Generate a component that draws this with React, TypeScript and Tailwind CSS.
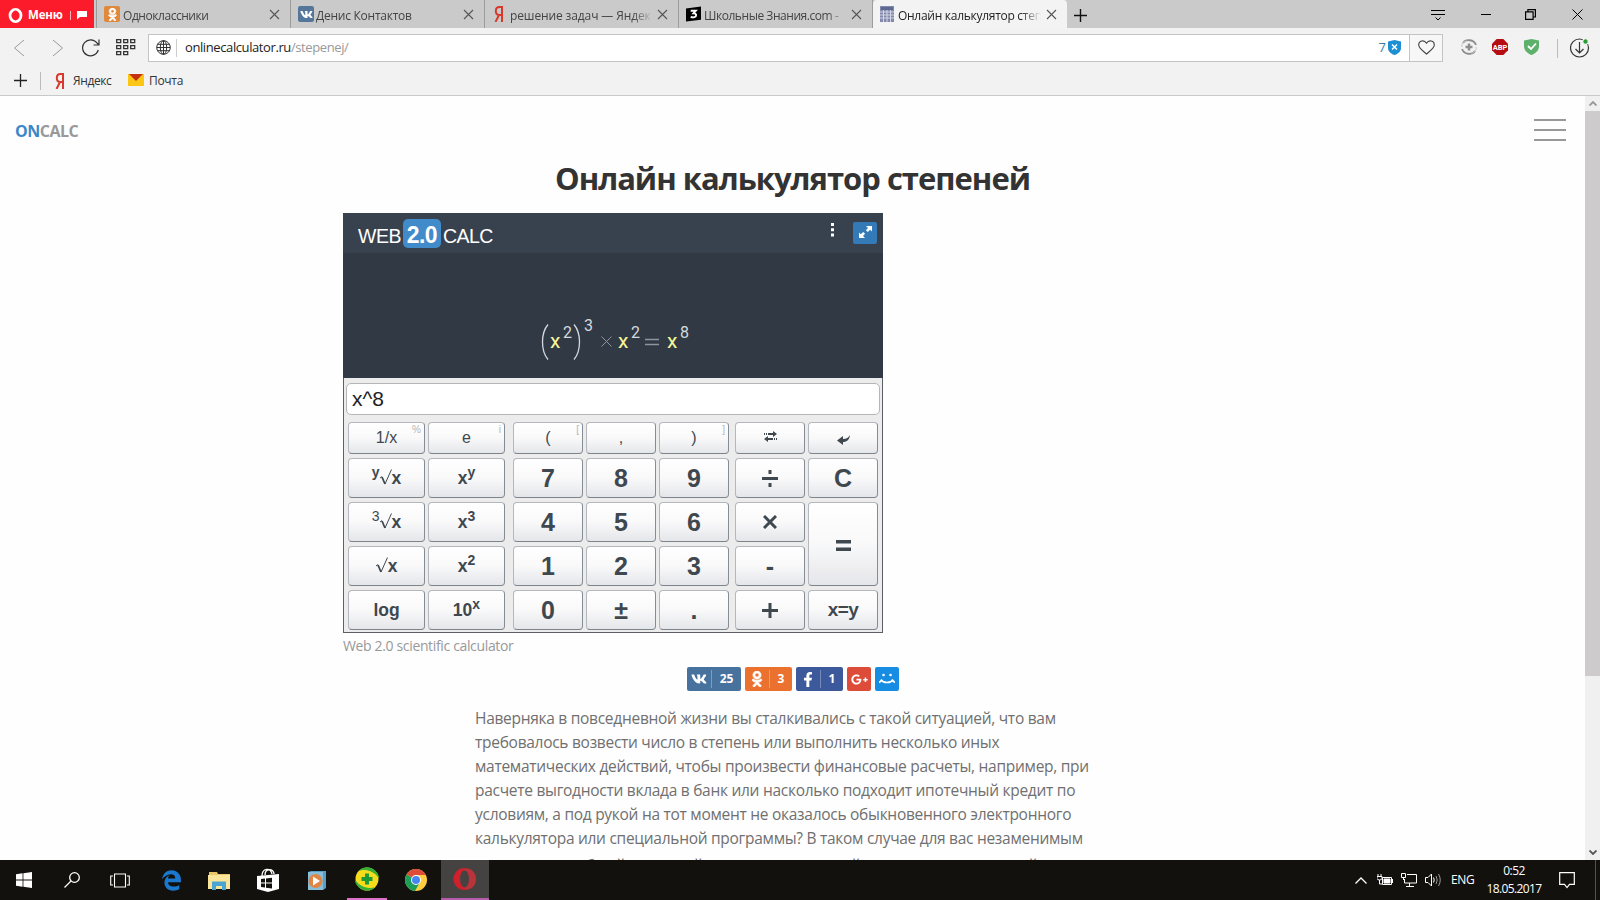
import React from 'react';
import { FaFacebookF, FaOdnoklassniki, FaVk } from 'react-icons/fa';
import { FaEdgeLegacy, FaGooglePlusG } from 'react-icons/fa6';

interface TabProps {
  icon: React.ReactNode;
  title: string;
  textClass?: string;
  active?: boolean;
}

interface KeyProps {
  children: React.ReactNode;
  corner?: string;
  className?: string;
}

function CloseIcon() {
  return (
    <svg className="h-[11px] w-[11px]" viewBox="0 0 11 11" fill="none" stroke="#555" strokeWidth="1.1">
      <path d="M1 1l9 9M10 1l-9 9" />
    </svg>
  );
}

function Tab({ icon, title, textClass = '', active }: TabProps) {
  return (
    <div
      className={`flex h-7 w-[194px] items-center pl-[7px] pr-[10px] ${
        active ? 'rounded-t bg-[#f3f3f3] text-[#222]' : 'border-r border-[#9d9d9d] text-[#444]'
      }`}
    >
      <div className="flex w-[18px] shrink-0 items-center">{icon}</div>
      <div className="h-7 w-[143px] whitespace-nowrap pt-px text-[12px] leading-[29px] [mask-image:linear-gradient(to_right,black_86%,transparent)]">
        <span className={textClass}>{title}</span>
      </div>
      <div className="ml-auto">
        <CloseIcon />
      </div>
    </div>
  );
}

function YandexIcon({ className = '' }: { className?: string }) {
  return (
    <svg className={`h-4 w-[10px] ${className}`} viewBox="0 0 10 16" fill="none" stroke="#d8392b" strokeWidth="2">
      <path d="M8 16V1H5.5C3.2 1 1.8 2.600 1.800 5s1.300 4 3.500 4H8M5 9L1.500 16" />
    </svg>
  );
}

function Key({ children, corner, className = 'pt-px' }: KeyProps) {
  return (
    <button
      className={`relative flex items-center justify-center rounded-[4px] border border-[#b4b8bd] border-r-[#858c93] border-b-[#7d848b] bg-gradient-to-b from-white via-[#f9f9fa] to-[#e5e6ea] font-bold text-[#3f484f] ${className}`}
    >
      {children}
      {corner && <span className="absolute right-[3px] top-px text-[10px] font-normal leading-3 text-[#b5b5b5]">{corner}</span>}
    </button>
  );
}

function Sup({ children }: { children: React.ReactNode }) {
  return <span className="relative -top-[6px] text-[14px]">{children}</span>;
}

function Root() {
  return (
    <svg className="-mt-[3px] h-4 w-3" viewBox="0 0 12 16" fill="none" stroke="#3f484f">
      <path d="M0 9l2-1.500" strokeWidth="1" />
      <path d="M2 8l3 7" strokeWidth="1.800" />
      <path d="M5 15L11.500 .5" strokeWidth="1" />
    </svg>
  );
}

function Paren({ right }: { right?: boolean }) {
  return (
    <svg className="h-9 w-2" viewBox="0 0 8 36" fill="none" stroke="#d5d9df" strokeWidth="1.300">
      <path d={right ? 'M1 .5Q6.500 7 6.500 18T1 35.500' : 'M7 .5Q1.500 7 1.500 18T7 35.500'} />
    </svg>
  );
}

function TitleBar() {
  return (
    <div className="flex h-7 bg-[#cacaca]">
      <div className="flex h-7 w-[94px] items-center bg-[#fb1b2a] pl-2 pt-[2px] text-white">
        <svg className="h-[15px] w-[15px]" viewBox="0 0 15 15">
          <ellipse cx="7.500" cy="7.500" rx="5.500" ry="6" fill="none" stroke="white" strokeWidth="2.800" />
          <ellipse cx="7.500" cy="7.500" rx="3" ry="5" fill="#fb1b2a" />
        </svg>
        <span className="ml-[5px] w-[37px] text-[11.500px] font-bold leading-6 tracking-[-0.200px]">Меню</span>
        <div className="ml-[5px] h-[9px] w-px bg-[#ffb0b4]" />
        <svg className="ml-[6px] h-[10px] w-[10px]" viewBox="0 0 10 10" fill="white">
          <path d="M0 1h10v6H3L0 9.500z" />
        </svg>
      </div>
      <div className="ml-[2px] flex border-l border-[#9d9d9d]">
        <Tab
          icon={
            <span className="flex h-4 w-4 items-center justify-center rounded-[2px] bg-[#e0893d]">
              <FaOdnoklassniki className="text-[13px] text-white" stroke="white" strokeWidth={25} />
            </span>
          }
          title="Одноклассники"
          textClass="pl-px tracking-[-0.450px]"
        />
        <Tab
          icon={
            <span className="flex h-4 w-4 items-center justify-center rounded-[2px] bg-[#54769b]">
              <FaVk className="text-[13px] text-white" />
            </span>
          }
          title="Денис Контактов"
          textClass="tracking-[-0.250px]"
        />
        <Tab icon={<YandexIcon className="ml-[2px]" />} title="решение задач — Яндек" textClass="tracking-[-0.120px]" />
        <Tab
          icon={
            <svg className="h-4 w-[15px]" viewBox="0 0 16 16">
              <path d="M0 2L16 0v14L0 16z" fill="black" />
              <path d="M5 4.500h5.500L8 7.300c2 0 2.800 1 2.800 2 0 2-3 3-5.800 1.700" fill="none" stroke="white" strokeWidth="2" />
            </svg>
          }
          title="Школьные Знания.com -"
          textClass="tracking-[-0.450px]"
        />
        <Tab
          active
          icon={
            <svg className="h-4 w-[14px]" viewBox="0 0 14 16">
              <path d="M0 0h14v16H0z" fill="#8389ad" />
              <path d="M1 1h12v3H1z" fill="#5e6994" />
              <path d="M0 6h14M0 9h14M0 12h14M3.500 4v12M7 4v12M10.500 4v12" stroke="#d2d5e4" />
            </svg>
          }
          title="Онлайн калькулятор степ"
          textClass="tracking-[-0.280px]"
        />
      </div>
      <svg className="ml-[7px] mt-[9px] h-[13px] w-[13px]" viewBox="0 0 13 13" stroke="#111" strokeWidth="1.400">
        <path d="M0 6.500h13M6.500 0v13" />
      </svg>
      <div className="ml-auto flex h-7 items-center text-black">
        <svg className="mr-9 mt-px h-3 w-[14px]" viewBox="0 0 14 12" fill="none" stroke="currentColor">
          <path d="M0 1.500h14M0 5.500h14M4.500 8.500L7 11l2.500-2.500" />
        </svg>
        <svg className="mr-[34px] h-[10px] w-[10px]" viewBox="0 0 10 10" stroke="currentColor">
          <path d="M0 5.500h10" />
        </svg>
        <svg className="mr-[36px] h-[11px] w-[11px]" viewBox="0 0 11 11" fill="none" stroke="currentColor" strokeWidth="1.200">
          <path d="M.6 2.800h7.500v7.500H.6zM2.900 2.800V.6h7.500V8H8" />
        </svg>
        <svg className="mr-[17px] h-[11px] w-[11px]" viewBox="0 0 11 11" stroke="currentColor">
          <path d="M.5.5l10 10M10.500.5l-10 10" />
        </svg>
      </div>
    </div>
  );
}

function AddressBar() {
  return (
    <div className="flex h-10 items-center bg-[#f2f2f2]">
      <svg className="ml-[13px] h-[18px] w-3" viewBox="0 0 12 18" fill="none" stroke="#999">
        <path d="M11 1L1.500 9l9.500 8" />
      </svg>
      <svg className="ml-[27px] h-[18px] w-3" viewBox="0 0 12 18" fill="none" stroke="#999">
        <path d="M1 1l9.500 8L1 17" />
      </svg>
      <svg className="ml-[18px] h-[18px] w-[18px]" viewBox="0 0 18 18" fill="none" stroke="#333" strokeWidth="1.200">
        <path d="M16.300 11A8 8 0 1 1 15 4l2 2M17 .5V6h-5.500" />
      </svg>
      <svg className="-mt-px ml-4 h-[17px] w-5" viewBox="0 0 20 17" fill="none" stroke="#333" strokeWidth="1.300">
        <path d="M.7.7h4v3h-4zM7.700.7h4v3h-4zM14.700.7h4v3h-4zM.7 6.700h4v3h-4zM7.700 6.700h4v3h-4zM14.700 6.700h4v3h-4zM.7 12.700h4v3h-4zM7.700 12.700h4v3h-4z" />
      </svg>
      <div className="ml-3 flex h-7 w-[1295px] items-center border border-[#c4c4c4] bg-white">
        <svg className="-mt-px ml-[7px] h-[15px] w-[15px]" viewBox="0 0 15 15" fill="none" stroke="#333">
          <circle cx="7.500" cy="7.500" r="6.800" />
          <ellipse cx="7.500" cy="7.500" rx="3.200" ry="6.800" />
          <path d="M.7 7.500h13.600M7.500.7v13.600M1.500 4.300h12M1.500 10.700h12" />
        </svg>
        <div className="ml-[5px] h-[18px] w-px bg-[#ccc]" />
        <div className="-mt-[3px] ml-2 text-[13px] leading-[26px] tracking-[-0.400px] text-[#222]">
          onlinecalculator.ru<span className="text-[#999]">/stepenej/</span>
        </div>
        <div className="ml-auto flex h-full items-center">
          <span className="-mt-px text-[13px] text-[#3a7ca5]">7</span>
          <svg className="-mt-px ml-[2px] mr-2 h-[15px] w-[13px]" viewBox="0 0 13 15">
            <path d="M0 1.500L6.500 0 13 1.500V8c0 4-4 6.300-6.500 7C4 14.300 0 12 0 8z" fill="#1d8fd3" />
            <path d="M4 4.500l5 5M9 4.500l-5 5" stroke="white" strokeWidth="1.500" />
          </svg>
          <div className="flex h-full w-[33px] items-center justify-center border-l border-[#c4c4c4] bg-[#f7f7f7]">
            <svg className="-mt-px h-[15px] w-[17px]" viewBox="0 0 17 15" fill="none" stroke="#444" strokeWidth="1.100">
              <path d="M8.500 14C6 11.500.7 8.500.7 4.700.7 1 6 -.8 8.500 3.300 11-.8 16.300 1 16.300 4.700c0 3.800-5.300 6.800-7.800 9.300z" />
            </svg>
          </div>
        </div>
      </div>
      <svg className="-mt-[2px] ml-[18px] h-4 w-4" viewBox="0 0 16 16" fill="none" stroke="#8d8d8d">
        <path d="M8 4.500v7M4.500 8h7" strokeWidth="2.500" />
        <path d="M2 4C5-.5 13 .5 15 6M14 12c-3 4.500-11 3.500-13-2" strokeWidth="1.800" />
        <path d="M1 8c-1-3 2-6 5-6M15 8c1 3-2 6-5 6" stroke="#c6c6c6" />
      </svg>
      <svg className="-mt-[2px] ml-[15px] h-4 w-4" viewBox="0 0 16 16">
        <path d="M4.700 0h6.600L16 4.700v6.600L11.300 16H4.700L0 11.300V4.700z" fill="#b50d12" />
        <text x="8" y="10.700" textAnchor="middle" fontSize="7.500" fontWeight="bold" fontFamily="Roboto, sans-serif" fill="white">ABP</text>
      </svg>
      <svg className="-mt-[2px] ml-4 h-4 w-[15px]" viewBox="0 0 15 16">
        <path d="M0 1.500L7.500 0 15 1.500V7c0 5-4 7.500-7.500 9C4 14.500 0 12 0 7z" fill="#5eb16b" />
        <path d="M4 7l3 3 5-5.500" fill="none" stroke="white" strokeWidth="1.800" />
      </svg>
      <div className="ml-[18px] h-[19px] w-px bg-[#bbb]" />
      <svg className="-mt-px ml-3 h-5 w-5" viewBox="0 0 20 20" fill="none" stroke="#333" strokeWidth="1.200">
        <circle cx="9.500" cy="10" r="9" />
        <path d="M9.500 4v11M5.500 11l4 4 4-4" />
        <circle cx="15.500" cy="3.500" r="2.800" fill="#2b9b33" stroke="#f2f2f2" />
      </svg>
    </div>
  );
}

function BookmarksBar() {
  return (
    <div className="flex h-7 items-center border-b border-[#c9c9c9] bg-[#f2f2f2] pb-[2px] text-[12px] text-[#333]">
      <svg className="ml-[14px] h-[13px] w-[13px]" viewBox="0 0 13 13" stroke="#222" strokeWidth="1.300">
        <path d="M0 6.500h13M6.500 0v13" />
      </svg>
      <div className="ml-[13px] h-[18px] w-px bg-[#bbb]" />
      <YandexIcon className="ml-[14px]" />
      <span className="ml-2 w-[39px] tracking-[-0.400px]">Яндекс</span>
      <svg className="-mt-px ml-4 h-3 w-4" viewBox="0 0 16 12">
        <path d="M0 0h16v12H0z" fill="#fbc614" />
        <path d="M1 0h14L8 7z" fill="#c53212" />
      </svg>
      <span className="ml-[5px] tracking-[-0.300px]">Почта</span>
    </div>
  );
}

const digitRows = ['7', '8', '9', '4', '5', '6', '1', '2', '3', '0', '±', '.'];

function Calculator() {
  return (
    <div className="h-[420px] w-[540px] border border-[#5c6066] bg-[#ececed] font-['Liberation_Sans',sans-serif]">
      <div className="-mx-px -mt-px bg-[#313945]">
        <div className="flex h-10 bg-[#38424f] text-white">
          <div className="flex items-center pl-[15px] pt-[7px] text-[19.500px] leading-none tracking-[-0.500px]">
            WEB
            <span className="relative -top-[3px] mx-[2px] flex h-[29px] w-[38px] items-center justify-center rounded-[5px] bg-[#428bca] pt-[3px] text-[23px] font-bold tracking-[-0.600px]">2.0</span>
            CALC
          </div>
          <svg className="ml-auto mr-[19px] mt-[10px] h-[14px] w-[3px]" viewBox="0 0 3 14" fill="white">
            <path d="M0 0h3v3H0zM0 5.300h3v3H0zM0 10.500h3v3H0z" />
          </svg>
          <div className="mr-[6px] mt-[9px] flex h-[22px] w-6 items-center justify-center rounded-[2px] bg-[#337ab7]">
            <svg className="-mt-[2px] h-3 w-[13px]" viewBox="0 0 13 12" fill="white">
              <path d="M7 0h6v5.500l-1.800-1.700-2.400 2.300-1.900-1.900L9 2zM6 12H0V6.500l1.800 1.700 2.400-2.300 1.900 1.900L4 10z" />
            </svg>
          </div>
        </div>
        <div className="flex h-[125px] items-center pl-[198px] pt-[52px] font-[Roboto,sans-serif] text-[21px] leading-none text-[#d5d9df]">
          <Paren />
          <span className="ml-px w-[13px] text-[#f7f799]">x</span>
          <span className="-mt-[17px] w-[10px] text-[16px]">2</span>
          <Paren right />
          <span className="-mt-8 ml-[3px] w-[10px] text-[16px]">3</span>
          <svg className="ml-[7px] h-[11px] w-[11px]" viewBox="0 0 11 11" stroke="#8d95a1">
            <path d="M.5.5l10 10M10.500.5l-10 10" />
          </svg>
          <span className="ml-[6px] w-[13px] text-[#f7f799]">x</span>
          <span className="-mt-[17px] w-[10px] text-[16px]">2</span>
          <svg className="ml-[4px] h-2 w-[14px]" viewBox="0 0 14 8" stroke="#8d95a1" strokeWidth="1.300">
            <path d="M0 1.500h14M0 6.500h14" />
          </svg>
          <span className="ml-[8px] w-[13px] text-[#f7f799]">x</span>
          <span className="-mt-[17px] w-[10px] text-[16px]">8</span>
        </div>
      </div>
      <div className="mx-[2px] mt-[5px] flex h-8 items-center rounded-[5px] border border-[#b5b5b5] bg-white pl-[5px] text-[21px] text-[#222]">x^8</div>
      <div className="ml-1 mt-[7px] flex">
        <div className="grid w-[157px] grid-cols-2 grid-rows-[32px_40px_40px_40px_40px] gap-x-[3px] gap-y-1 text-[17.500px]">
          <Key className="pb-px" corner="%"><span className="text-[16px] font-normal">1/x</span></Key>
          <Key className="pb-px" corner="i"><span className="text-[16px] font-normal">e</span></Key>
          <Key><Sup>y</Sup><Root />x</Key>
          <Key>x<Sup>y</Sup></Key>
          <Key><Sup><span className="font-normal">3</span></Sup><Root />x</Key>
          <Key>x<Sup>3</Sup></Key>
          <Key><Root />x</Key>
          <Key>x<Sup>2</Sup></Key>
          <Key>log</Key>
          <Key>10<Sup>x</Sup></Key>
        </div>
        <div className="ml-2 grid w-[216px] grid-cols-3 grid-rows-[32px_40px_40px_40px_40px] gap-x-[3px] gap-y-1 text-[25px]">
          <Key className="pb-px" corner="["><span className="text-[16px] font-normal">(</span></Key>
          <Key className="pb-px"><span className="text-[16px] font-normal">,</span></Key>
          <Key className="pb-px" corner="]"><span className="text-[16px] font-normal">)</span></Key>
          {digitRows.map((digit) => (
            <Key key={digit}>{digit}</Key>
          ))}
        </div>
        <div className="ml-[6px] grid w-[143px] grid-cols-2 grid-rows-[32px_40px_40px_40px_40px] gap-x-[3px] gap-y-1 text-[25px]">
          <Key>
            <svg className="-mt-1 h-[11px] w-[13px]" viewBox="0 0 13 11" fill="currentColor">
              <path d="M4 2h5V0l4 3-4 3V4H4zM0 2h1v2H0zM2 2h1v2H2zM9 7H4V5L0 8l4 3V9h5zM10 7h1v2h-1zM12 7h1v2h-1z" />
            </svg>
          </Key>
          <Key>
            <svg className="mt-[2px] h-[10px] w-[13px]" viewBox="0 0 13 10" fill="currentColor">
              <path d="M0 5.500L6 1v3c3 0 5-1 7-4-.5 4.500-3 7-7 7v3z" />
            </svg>
          </Key>
          <Key>
            <svg className="-mt-px h-[17px] w-4" viewBox="0 0 16 17" fill="currentColor"><path d="M0 7h16v3H0zM6.500 0h3v4h-3zM6.500 13h3v4h-3z" /></svg>
          </Key>
          <Key>C</Key>
          <Key>
            <svg className="-mt-px h-[14px] w-[14px]" viewBox="0 0 14 14" fill="none" stroke="currentColor" strokeWidth="3"><path d="M1 1l12 12M13 1L1 13" /></svg>
          </Key>
          <Key className="row-span-2 pt-[3px]">
            <svg className="h-[11px] w-[15px]" viewBox="0 0 15 11" fill="currentColor"><path d="M0 0h15v3.500H0zM0 7.500h15V11H0z" /></svg>
          </Key>
          <Key>-</Key>
          <Key>
            <svg className="-mt-px h-[15px] w-4" viewBox="0 0 16 15" fill="currentColor"><path d="M0 6h16v3H0zM6.500 0h3v15h-3z" /></svg>
          </Key>
          <Key><span className="text-[19px] tracking-[-0.500px]">x=y</span></Key>
        </div>
      </div>
    </div>
  );
}

function ShareButtons() {
  return (
    <div className="flex gap-1 text-[12px] font-bold text-white">
      <div className="flex h-6 w-[54px] items-center rounded-[2px] bg-[#48729e]">
        <FaVk className="ml-1 text-[16px]" />
        <span className="ml-1 flex h-[18px] flex-1 items-center justify-center border-l border-[#7f9cbb]">25</span>
      </div>
      <div className="flex h-6 w-[47px] items-center rounded-[2px] bg-[#eb722e]">
        <FaOdnoklassniki className="ml-1 text-[16px]" stroke="white" strokeWidth={25} />
        <span className="ml-1 flex h-[18px] flex-1 items-center justify-center border-l border-[#f19c6c]">3</span>
      </div>
      <div className="flex h-6 w-[47px] items-center rounded-[2px] bg-[#3c5a9b]">
        <FaFacebookF className="ml-1 w-4 text-[15px]" />
        <span className="ml-1 flex h-[18px] flex-1 items-center justify-center border-l border-[#768bb9]">1</span>
      </div>
      <div className="flex h-6 w-6 items-center justify-center rounded-[2px] bg-[#dd4b39]">
        <FaGooglePlusG className="text-[17px]" />
      </div>
      <div className="flex h-6 w-6 items-center justify-center rounded-[2px] bg-[#168de2]">
        <svg className="h-3 w-4" viewBox="0 0 16 12" fill="none" stroke="white" strokeWidth="1.700">
          <path d="M2 6.500c2 4 10 4 12 0M0 9.500l3-2.500M16 9.500L13 7" />
          <circle cx="4.500" cy="2" r="1.300" fill="white" stroke="none" />
          <circle cx="11.500" cy="2" r="1.300" fill="white" stroke="none" />
        </svg>
      </div>
    </div>
  );
}

const article = [
  'Наверняка в повседневной жизни вы сталкивались с такой ситуацией, что вам',
  'требовалось возвести число в степень или выполнить несколько иных',
  'математических действий, чтобы произвести финансовые расчеты, например, при',
  'расчете выгодности вклада в банк или насколько подходит ипотечный кредит по',
  'условиям, а под рукой на тот момент не оказалось обыкновенного электронного',
  'калькулятора или специальной программы? В таком случае для вас незаменимым',
  'станет этот удобный понятный или математический, или уже многоцелевой',
];

function PageContent() {
  return (
    <div className="flex h-[764px] bg-[#fefefe]">
      <main className="h-full w-[1585px] overflow-hidden">
        <div className="flex h-[59px] items-start justify-between">
          <div className="pl-[15px] pt-[23px] text-[16px] font-bold leading-6 tracking-[-0.500px] text-[#999]">
            <span className="text-[#3d87c8]">ON</span>CALC
          </div>
          <div className="mr-[19px] mt-[23px] flex flex-col gap-2">
            <div className="h-[2px] w-8 bg-[#999]" />
            <div className="h-[2px] w-8 bg-[#999]" />
            <div className="h-[2px] w-8 bg-[#999]" />
          </div>
        </div>
        <h1 className="h-[58px] text-center text-[31px] font-bold leading-[46px] tracking-[-1px] text-[#333]">Онлайн калькулятор степеней</h1>
        <div className="pl-[343px]">
          <Calculator />
          <div className="h-[34px] text-[14px] leading-[26px] tracking-[-0.350px] text-[#999]">Web 2.0 scientific calculator</div>
        </div>
        <div className="pl-[687px]">
          <ShareButtons />
        </div>
        <div className="ml-[475px] mt-[15px] text-[15.500px] leading-6 tracking-[-0.280px] text-[#707070]">
          {article.map((line) => (
            <p key={line} className="h-6 whitespace-nowrap last:pt-[3px]">{line}</p>
          ))}
        </div>
      </main>
      <div className="flex w-[15px] flex-col items-center bg-[#f0f0f0]">
        <svg className="my-[5px] h-[5px] w-2" viewBox="0 0 8 5" fill="none" stroke="#999" strokeWidth="1.800"><path d="M.5 4.500L4 1l3.500 3.500" /></svg>
        <div className="h-[565px] w-full bg-[#cdcbcc]" />
        <svg className="mb-[5px] mt-auto h-[5px] w-2" viewBox="0 0 8 5" fill="none" stroke="#555" strokeWidth="1.800"><path d="M.5.5L4 4 7.500.5" /></svg>
      </div>
    </div>
  );
}

function TaskItem({ children, className = 'w-12' }: { children: React.ReactNode; className?: string }) {
  return <div className={`flex h-10 items-center justify-center ${className}`}>{children}</div>;
}

function Taskbar() {
  return (
    <div className="flex h-10 items-center bg-[#13110e] text-white">
      <TaskItem>
        <svg className="h-4 w-4" viewBox="0 0 16 16" fill="white">
          <path d="M0 2.300L6.600 1.300v6.300H0zM7.400 1.200L16 0v7.600H7.400zM0 8.400h6.600v6.300L0 13.700zM7.400 8.400H16V16l-8.600-1.200z" />
        </svg>
      </TaskItem>
      <TaskItem>
        <svg className="h-4 w-4" viewBox="0 0 16 16" fill="none" stroke="white" strokeWidth="1.300">
          <circle cx="10.500" cy="5.500" r="4.800" />
          <path d="M7 9L.5 15.500" />
        </svg>
      </TaskItem>
      <TaskItem>
        <svg className="h-[15px] w-5" viewBox="0 0 20 15" fill="none" stroke="white" strokeWidth="1.100">
          <path d="M4.500 1h11v13h-11zM3 3H.7v9H3M17 3h2.300v9H17" />
        </svg>
      </TaskItem>
      <TaskItem className="ml-[3px] w-12">
        <FaEdgeLegacy className="text-[21px] text-[#1b78cf]" />
      </TaskItem>
      <TaskItem>
        <svg className="h-[19px] w-[22px]" viewBox="0 0 22 19">
          <path d="M1 1h8l1 2h12v15H1z" fill="#e9c867" />
          <path d="M0 4h22v14H0z" fill="#fbe59b" />
          <path d="M4 19v-8.500h14V19h-4v-4H8v4z" fill="#4aa5d2" />
        </svg>
      </TaskItem>
      <TaskItem className="ml-px w-12">
        <svg className="h-6 w-[22px]" viewBox="0 0 22 24">
          <path d="M0 8l22-2v15L11 24 0 21z" fill="white" />
          <path d="M5 8C5 0 14-1 15 6M8 7c0-7 9-7 9-1" fill="none" stroke="white" strokeWidth="1.300" />
          <path d="M4 11l4-.5v4H4zM9 10.400l6-.7v4.800H9zM4 15.500h4v4L4 19zM9 15.500h6v5l-6-.8z" fill="#13110e" />
        </svg>
      </TaskItem>
      <TaskItem className="ml-px w-12">
        <svg className="h-[19px] w-5" viewBox="0 0 20 19">
          <path d="M1 1l3-1h15v17l-3 2H1z" fill="#55a0c6" />
          <path d="M1 1h15v18H1z" fill="#87bfdb" />
          <circle cx="8.500" cy="10" r="7" fill="#e08645" />
          <path d="M6 5.500v9l7-4.500z" fill="white" />
        </svg>
      </TaskItem>
      <TaskItem className="ml-[6px] w-10 border-b-[2px] border-[#dd72ca]">
        <svg className="h-6 w-6" viewBox="0 0 24 24">
          <circle cx="12" cy="12" r="11.500" fill="#f5dd1d" />
          <path d="M5 3c7-5 17-1 18.500 7C20 5 12 1 5 3zM19 21C12 26 2 22 .5 14 4 19 12 23 19 21z" fill="#35ae38" stroke="#35ae38" strokeWidth="1" />
          <path d="M12 6.500v11M6.500 12h11" stroke="#1b9a35" strokeWidth="4" />
        </svg>
      </TaskItem>
      <TaskItem className="ml-[5px] w-12">
        <svg className="h-[22px] w-[22px]" viewBox="0 0 22 22">
          <circle cx="11" cy="11" r="11" fill="#ffcd40" />
          <path d="M11 11L1.500 5.500a11 11 0 0 1 19 0L20.500 6H11z" fill="#df4b3b" />
          <path d="M11 11L1.500 5.500A11 11 0 0 0 10 22l5-9z" fill="#1c9e58" />
          <circle cx="11" cy="11" r="5" fill="white" />
          <circle cx="11" cy="11" r="4" fill="#4686f3" />
        </svg>
      </TaskItem>
      <TaskItem className="ml-px w-12 border-b-[2px] border-[#b45bac] bg-[#454341]">
        <svg className="h-[22px] w-6" viewBox="0 0 24 22">
          <circle cx="11.500" cy="11" r="11" fill="#cf202b" />
          <path d="M11 1.500C17-1.500 23 4 23 11S17 23.500 11 20.500z" fill="#b8333a" />
          <ellipse cx="11.500" cy="11" rx="4.500" ry="8.500" fill="#454341" />
        </svg>
      </TaskItem>
      <div className="ml-auto flex h-10 items-center">
        <svg className="h-[7px] w-3" viewBox="0 0 12 7" fill="none" stroke="white" strokeWidth="1.300"><path d="M.5 6.500L6 1l5.500 5.500" /></svg>
        <svg className="ml-[10px] h-3 w-4" viewBox="0 0 16 12" fill="none" stroke="white">
          <path d="M5.500 3.500h9v7h-9z" />
          <path d="M7 5h6v4H7z" fill="white" />
          <path d="M15.500 5v4M1 0v3M4 0v3M0 2.500h5v2c0 2-5 2-5 0zM2.500 6v4H5" />
        </svg>
        <svg className="ml-2 h-[14px] w-4" viewBox="0 0 16 14" fill="none" stroke="white">
          <path d="M6 1.500h9.500v8.500H3.500V6M8.500 10v3.500M5 13.500h8M.5.5h4v4h-4zM2.500 4.500V7" />
        </svg>
        <svg className="ml-2 h-[14px] w-4" viewBox="0 0 16 14" fill="none" stroke="white">
          <path d="M.5 4.500h2.500L6.500 1v12L3 9.500H.5zM8.500 4.500q1.500 2.500 0 5" />
          <path d="M11 3q2.500 4 0 8M13.500 1q3.500 6 0 12" stroke="#999" />
        </svg>
        <span className="ml-[10px] w-[23px] text-[12px] tracking-[-0.400px]">ENG</span>
        <div className="ml-[9px] w-[62px] text-center text-[12px] leading-[18px] tracking-[-0.600px]">
          <div>0:52</div>
          <div>18.05.2017</div>
        </div>
        <svg className="ml-[14px] h-[17px] w-4" viewBox="0 0 16 17" fill="none" stroke="white" strokeWidth="1.200">
          <path d="M.7.7h14.600v11.600H10.500L8 15.500l-2.500-3.200H.7z" />
        </svg>
        <div className="ml-5 mr-1 h-10 w-px bg-[#55534f]" />
      </div>
    </div>
  );
}

export default function App() {
  return (
    <div className="flex h-[900px] w-[1600px] flex-col overflow-hidden bg-white font-['Open_Sans','Noto_Sans',sans-serif]">
      <TitleBar />
      <AddressBar />
      <BookmarksBar />
      <PageContent />
      <Taskbar />
    </div>
  );
}
